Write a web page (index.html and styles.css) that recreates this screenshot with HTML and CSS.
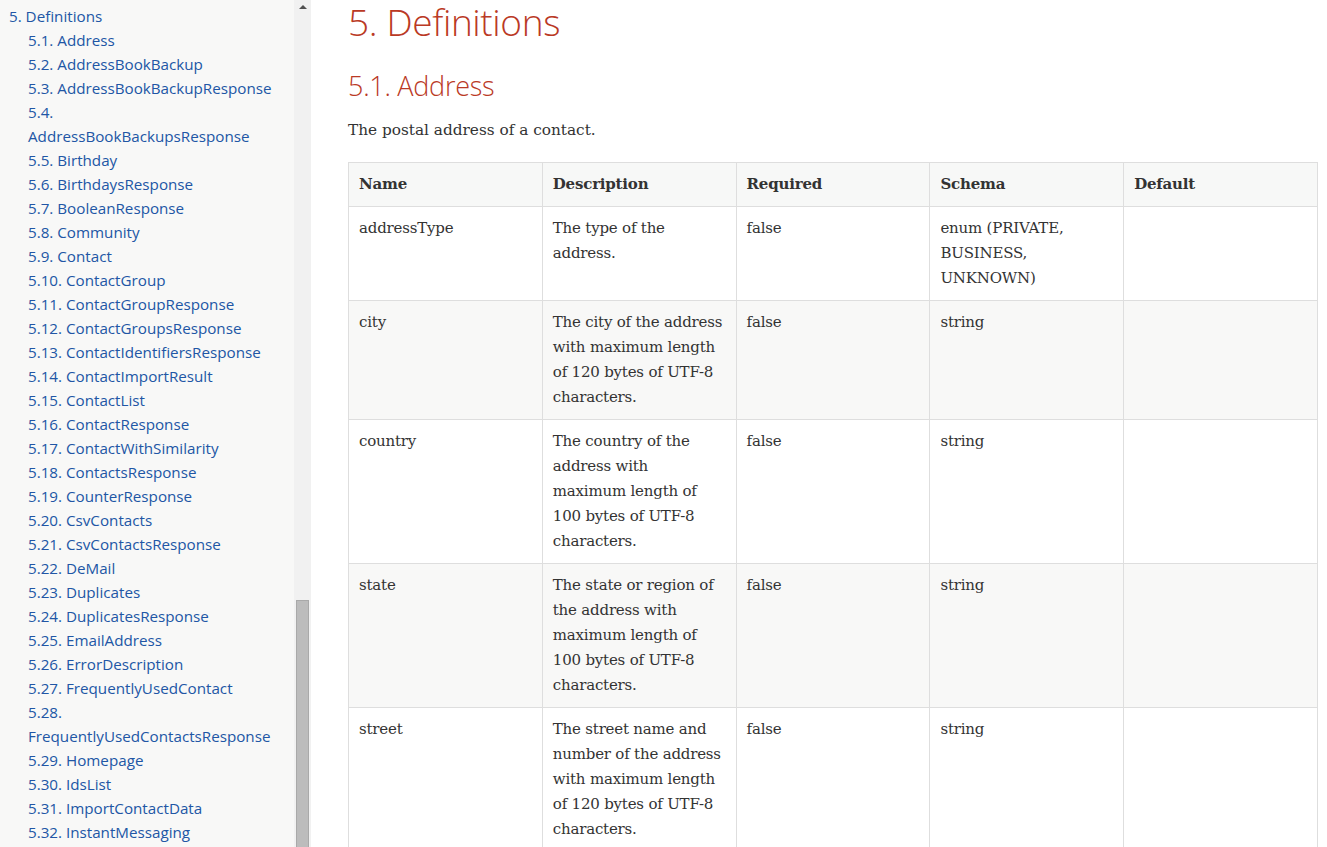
FILE: index.html
```html
<!DOCTYPE html>
<html lang="en">
<head>
<meta charset="utf-8">
<title>Definitions</title>
<link rel="stylesheet" href="styles.css">
</head>
<body>
<div class="page">
  <nav class="toc">
    <div class="toc-scroll">
      <ul class="toc-l1">
        <li><a href="#definitions">5. Definitions</a>
          <ul class="toc-l2">
            <li><a href="#">5.1. Address</a></li>
            <li><a href="#">5.2. AddressBookBackup</a></li>
            <li><a href="#">5.3. AddressBookBackupResponse</a></li>
            <li><a href="#">5.4.<br>AddressBookBackupsResponse</a></li>
            <li><a href="#">5.5. Birthday</a></li>
            <li><a href="#">5.6. BirthdaysResponse</a></li>
            <li><a href="#">5.7. BooleanResponse</a></li>
            <li><a href="#">5.8. Community</a></li>
            <li><a href="#">5.9. Contact</a></li>
            <li><a href="#">5.10. ContactGroup</a></li>
            <li><a href="#">5.11. ContactGroupResponse</a></li>
            <li><a href="#">5.12. ContactGroupsResponse</a></li>
            <li><a href="#">5.13. ContactIdentifiersResponse</a></li>
            <li><a href="#">5.14. ContactImportResult</a></li>
            <li><a href="#">5.15. ContactList</a></li>
            <li><a href="#">5.16. ContactResponse</a></li>
            <li><a href="#">5.17. ContactWithSimilarity</a></li>
            <li><a href="#">5.18. ContactsResponse</a></li>
            <li><a href="#">5.19. CounterResponse</a></li>
            <li><a href="#">5.20. CsvContacts</a></li>
            <li><a href="#">5.21. CsvContactsResponse</a></li>
            <li><a href="#">5.22. DeMail</a></li>
            <li><a href="#">5.23. Duplicates</a></li>
            <li><a href="#">5.24. DuplicatesResponse</a></li>
            <li><a href="#">5.25. EmailAddress</a></li>
            <li><a href="#">5.26. ErrorDescription</a></li>
            <li><a href="#">5.27. FrequentlyUsedContact</a></li>
            <li><a href="#">5.28.<br>FrequentlyUsedContactsResponse</a></li>
            <li><a href="#">5.29. Homepage</a></li>
            <li><a href="#">5.30. IdsList</a></li>
            <li><a href="#">5.31. ImportContactData</a></li>
            <li><a href="#">5.32. InstantMessaging</a></li>
          </ul>
        </li>
      </ul>
    </div>
    <div class="scrollbar">
      <div class="sb-arrow"></div>
      <div class="sb-space"></div>
      <div class="sb-thumb"></div>
    </div>
  </nav>
  <main class="content">
    <h2 id="definitions" class="h2">5. Definitions</h2>
    <h3 class="h3">5.1. Address</h3>
    <p class="lead">The postal address of a contact.</p>
    <table class="tbl">
      <colgroup><col><col><col><col><col></colgroup>
      <thead>
        <tr><th>Name</th><th>Description</th><th>Required</th><th>Schema</th><th>Default</th></tr>
      </thead>
      <tbody>
        <tr>
          <td>addressType</td>
          <td>The type of the<br>address.</td>
          <td>false</td>
          <td>enum (PRIVATE,<br>BUSINESS,<br>UNKNOWN)</td>
          <td></td>
        </tr>
        <tr>
          <td>city</td>
          <td>The city of the address<br>with maximum length<br>of 120 bytes of UTF-8<br>characters.</td>
          <td>false</td>
          <td>string</td>
          <td></td>
        </tr>
        <tr>
          <td>country</td>
          <td>The country of the<br>address with<br>maximum length of<br>100 bytes of UTF-8<br>characters.</td>
          <td>false</td>
          <td>string</td>
          <td></td>
        </tr>
        <tr>
          <td>state</td>
          <td>The state or region of<br>the address with<br>maximum length of<br>100 bytes of UTF-8<br>characters.</td>
          <td>false</td>
          <td>string</td>
          <td></td>
        </tr>
        <tr>
          <td>street</td>
          <td>The street name and<br>number of the address<br>with maximum length<br>of 120 bytes of UTF-8<br>characters.</td>
          <td>false</td>
          <td>string</td>
          <td></td>
        </tr>
      </tbody>
    </table>
  </main>
</div>
</body>
</html>
```

FILE: styles.css
```css
*, *::before, *::after { box-sizing: border-box; }

html, body {
  margin: 0;
  padding: 0;
  height: 100%;
  overflow: hidden;
  background: #fff;
}

body {
  font-family: "DejaVu Serif", serif;
  color: #333;
}

.page {
  display: flex;
  height: 847px;
  overflow: hidden;
}

.toc {
  flex: 0 0 311px;
  display: flex;
  height: 100%;
  background: #f8f8f7;
  overflow: hidden;
}

.toc-scroll {
  flex: 0 0 294px;
  padding: 4px 0 0 9px;
  overflow: hidden;
}

.toc ul {
  list-style: none;
  margin: 0;
  padding: 0;
  font-family: "Open Sans", sans-serif;
  font-size: 15.2px;
}

.toc li {
  line-height: 24px;
}

.toc-l2 {
  padding-left: 19px !important;
}

.toc a {
  color: #2156a5;
  text-decoration: none;
}

.scrollbar {
  flex: 0 0 17px;
  display: flex;
  flex-direction: column;
  background: #f1f1f1;
}

.sb-arrow {
  height: 17px;
  display: flex;
  justify-content: center;
  padding-top: 5px;
}

.sb-arrow::before {
  content: "";
  width: 0;
  height: 0;
  border-left: 4px solid transparent;
  border-right: 4px solid transparent;
  border-bottom: 4px solid #505050;
}

.sb-space {
  height: 583px;
}

.sb-thumb {
  flex: 1;
  margin: 0 2px 0 2px;
  background: #bcbcbc;
  border: 1px solid #a9a9a9;
  border-bottom: 0;
}

.content {
  flex: 1;
  padding: 0 9px 0 37px;
  overflow: hidden;
}

.h2, .h3 {
  font-family: "Open Sans", sans-serif;
  font-weight: 300;
  color: #ba3925;
  margin: 0;
  line-height: 1.2;
  letter-spacing: -0.01em;
}

.h2 {
  font-size: 37px;
}

.h3 {
  font-size: 27px;
  margin-top: 26px;
}

.lead {
  margin: 14px 0 0 0;
  font-size: 15.3px;
  line-height: 27px;
  color: #333;
}

.tbl {
  margin-top: 18px;
  width: 970px;
  table-layout: fixed;
  border-collapse: collapse;
  border: 1px solid #dedede;
  font-size: 15px;
  letter-spacing: -0.2px;
  color: #333;
}

.tbl th, .tbl td {
  border: 1px solid #dedede;
  padding: 9px 10px;
  line-height: 25px;
  text-align: left;
  vertical-align: top;
  white-space: nowrap;
}

.tbl thead tr {
  background: #f7f8f7;
}

.tbl th {
  font-weight: bold;
}

.tbl tbody tr:nth-child(even) {
  background: #f8f8f7;
}
```
